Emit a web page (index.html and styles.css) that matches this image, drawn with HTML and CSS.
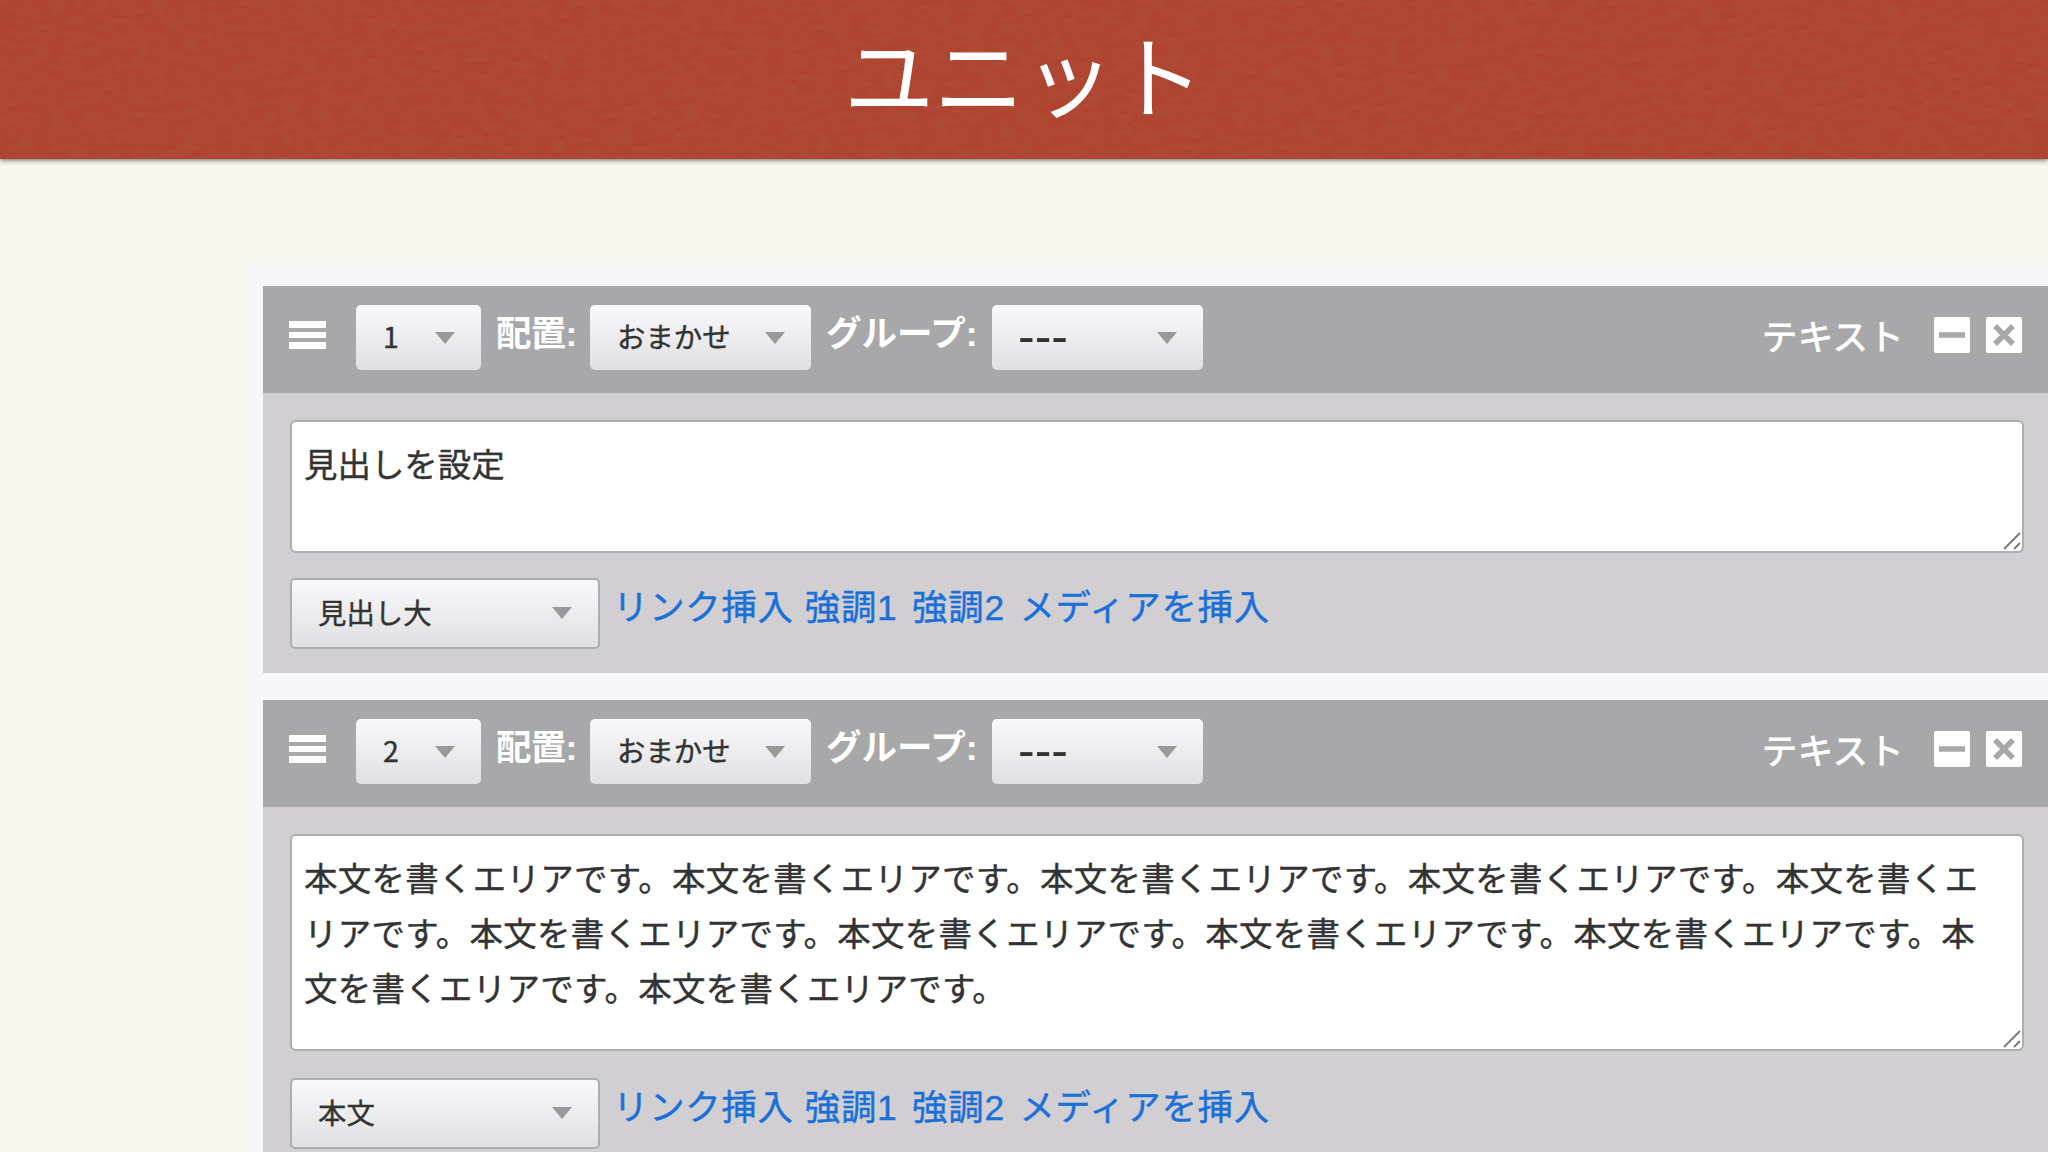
FILE: index.html
```html
<!DOCTYPE html>
<html lang="ja">
  <head>
    <meta charset="UTF-8" />
    <title>ユニット</title>
    <link rel="stylesheet" href="styles.css">
  </head>
  <body>
    <header class="title-bar">
      <svg class="texture" width="100%" height="100%">
        <filter id="paper">
          <feTurbulence type="fractalNoise" baseFrequency="0.06 0.16" numOctaves="5" seed="4" />
          <feColorMatrix values="0 0 0 0 0.35  0 0 0 0 0.2  0 0 0 0 0.1  0.7 0 0 0 -0.2" />
        </filter>
        <rect width="100%" height="100%" filter="url(#paper)" />
      </svg>
      <h1>ユニット</h1>
    </header>

    <main class="units">
      <section class="unit">
        <div class="unit-head">
          <div class="handle"><i></i><i></i><i></i></div>
          <div class="select number">1</div>
          <label class="align-label">配置:</label>
          <div class="select align">おまかせ</div>
          <label class="group-label">グループ:</label>
          <div class="select group">---</div>
          <span class="type">テキスト</span>
          <svg class="icon" viewBox="0 0 36 36"><rect width="36" height="36" rx="2" /><path d="M5 18H31" /></svg>
          <svg class="icon" viewBox="0 0 36 36"><rect width="36" height="36" rx="2" /><path d="M9 9L27 27M27 9L9 27" /></svg>
        </div>
        <div class="unit-body">
          <div class="textarea heading">見出しを設定
            <svg class="grip" viewBox="0 0 18 18"><path d="M1 17L17 1M11 17L17 11" /></svg>
          </div>
          <div class="tools">
            <div class="select tag">見出し大</div>
            <div class="links"><a>リンク挿入</a> <a class="em">強調1</a> <a class="em">強調2</a> <a>メディアを挿入</a></div>
          </div>
        </div>
      </section>

      <section class="unit">
        <div class="unit-head">
          <div class="handle"><i></i><i></i><i></i></div>
          <div class="select number">2</div>
          <label class="align-label">配置:</label>
          <div class="select align">おまかせ</div>
          <label class="group-label">グループ:</label>
          <div class="select group">---</div>
          <span class="type">テキスト</span>
          <svg class="icon" viewBox="0 0 36 36"><rect width="36" height="36" rx="2" /><path d="M5 18H31" /></svg>
          <svg class="icon" viewBox="0 0 36 36"><rect width="36" height="36" rx="2" /><path d="M9 9L27 27M27 9L9 27" /></svg>
        </div>
        <div class="unit-body">
          <div class="textarea text">本文を書くエリアです。本文を書くエリアです。本文を書くエリアです。本文を書くエリアです。本文を書くエ<br>リアです。本文を書くエリアです。本文を書くエリアです。本文を書くエリアです。本文を書くエリアです。本<br>文を書くエリアです。本文を書くエリアです。
            <svg class="grip" viewBox="0 0 18 18"><path d="M1 17L17 1M11 17L17 11" /></svg>
          </div>
          <div class="tools">
            <div class="select tag">本文</div>
            <div class="links"><a>リンク挿入</a> <a class="em">強調1</a> <a class="em">強調2</a> <a>メディアを挿入</a></div>
          </div>
        </div>
      </section>
    </main>
  </body>
</html>
```
FILE: styles.css
```css
* {
  box-sizing: border-box;
}

body {
  background-color: #f7f7ec;
  color: #333;
  font-family: "Noto Sans CJK JP", sans-serif;
  height: 1152px;
  margin: 0;
  overflow: hidden;
}

.title-bar {
  background-color: #b04330;
  box-shadow: 0 1px 5px rgba(0, 0, 0, 0.6);
  height: 159px;
  position: relative;
  text-align: center;
}

.texture {
  left: 0;
  opacity: 0.42;
  position: absolute;
  top: 0;
}

h1 {
  color: #fff;
  font-size: 90px;
  font-weight: 400;
  line-height: 145px;
  margin: 0;
  position: relative;
}

.units {
  background-color: #f7f6f8;
  box-shadow: 0 0 10px 4px #f7f6f6;
  display: flex;
  flex-direction: column;
  gap: 27px;
  height: 900px;
  margin: 107px 0 0 248px;
  padding: 20px 0 0 15px;
}

.unit {
  background-color: #d1cfd2;
  flex: none;
}

.unit-head {
  align-items: center;
  background-color: #a8a7a9;
  color: #fff;
  display: flex;
  height: 107px;
  padding: 0 26px 4px;
}

.handle {
  display: flex;
  flex-direction: column;
  gap: 4px;
  margin: -5px 30px 0 0;
  width: 37px;
}

.handle i {
  background-color: #fff;
  height: 6.4px;
}

.select {
  -webkit-text-stroke: 0.4px #333;
  background: linear-gradient(#f9f8fa, #e0dfe1);
  border-radius: 5px;
  color: #333;
  flex: none;
  font-size: 28.4px;
  height: 65px;
  line-height: 61px;
  padding-left: 27px;
  position: relative;
}

.select::after {
  border: 10.5px solid transparent;
  border-bottom: 0;
  border-top: 12px solid #99989a;
  content: "";
  position: absolute;
  right: 26px;
  top: 27px;
}

.number {
  width: 125px;
}

.align {
  width: 221px;
}

.group {
  -webkit-text-stroke: 0;
  font-family: "Liberation Sans", sans-serif;
  font-size: 50px;
  line-height: 63px;
  padding-left: 26px;
  width: 211px;
}

.align-label,
.group-label {
  font: bold 35.5px/60px "Liberation Sans", "Noto Sans CJK JP", sans-serif;
  height: 68px;
  padding-left: 15px;
  white-space: nowrap;
}

.align-label {
  letter-spacing: -0.8px;
  width: 109px;
}

.group-label {
  width: 181px;
}

.type {
  -webkit-text-stroke: 0.8px #fff;
  font-size: 35.5px;
  letter-spacing: 0.3px;
  line-height: 60px;
  margin: -5px 30px 0 auto;
}

.icon {
  height: 36px;
  margin-top: -6px;
  width: 36px;
}

.icon + .icon {
  margin-left: 16px;
}

.icon rect {
  fill: #fff;
}

.icon path {
  stroke: #a8a7a9;
  stroke-width: 5.5;
}

.unit-body {
  padding: 27px 24px 24px 27px;
}

.textarea {
  -webkit-text-stroke: 0.4px #333;
  background-color: #fff;
  border: 2px solid #adacae;
  border-radius: 6px;
  font-size: 33.46px;
  letter-spacing: 0.3px;
  line-height: 55.2px;
  padding: 13px 12px;
  position: relative;
  white-space: nowrap;
}

.heading {
  height: 133px;
  letter-spacing: 0;
}

.text {
  height: 217px;
}

.text + .tools {
  margin-top: 27px;
}

.grip {
  bottom: 1px;
  height: 18px;
  position: absolute;
  right: 1px;
  width: 18px;
}

.grip path {
  stroke: #777;
  stroke-width: 1.8;
}

.tools {
  display: flex;
  margin-top: 25px;
}

.tag {
  border: 2px solid #adacae;
  height: 71px;
  line-height: 64px;
  padding-left: 26px;
  width: 310px;
}

.links {
  -webkit-text-stroke: 0.4px #1b70d8;
  color: #1b70d8;
  font: 35.4px/60px "Liberation Sans", "Noto Sans CJK JP", sans-serif;
  letter-spacing: 0.75px;
  padding-left: 13px;
  white-space: nowrap;
  word-spacing: 0.5px;
}

.em {
  margin-right: 3.5px;
}
```
